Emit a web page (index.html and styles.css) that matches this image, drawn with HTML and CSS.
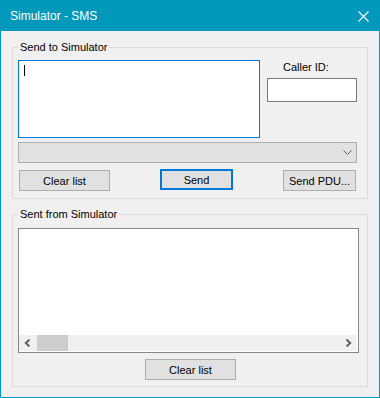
FILE: index.html
```html
<!DOCTYPE html>
<html lang="en">
<head>
  <meta charset="UTF-8" />
  <title>Simulator - SMS</title>
  <link rel="stylesheet" href="styles.css">
</head>
<body>

<div class="window">
  <div class="titlebar">
    <span class="title">Simulator - SMS</span>
    <svg class="close" width="11" height="11" viewBox="0 0 11 11">
      <path d="M0.5 0.5 L10.5 10.5 M10.5 0.5 L0.5 10.5" stroke="#fff" stroke-width="1.1" fill="none" />
    </svg>
  </div>

  <div class="client">
    <fieldset class="group group-send">
      <legend>Send to Simulator</legend>
      <div class="send-top">
        <div class="edit message"><span class="caret"></span></div>
        <div class="caller">
          <label class="caller-label">Caller ID:</label>
          <div class="edit caller-input"></div>
        </div>
      </div>
      <div class="combo">
        <svg width="9" height="5" viewBox="0 0 9 5">
          <path d="M0.5 0.5 L4.5 4.5 L8.5 0.5" stroke="#606060" stroke-width="1" fill="none" />
        </svg>
      </div>
      <div class="buttons">
        <button class="btn">Clear list</button>
        <button class="btn default">Send</button>
        <button class="btn">Send PDU...</button>
      </div>
    </fieldset>

    <fieldset class="group group-sent">
      <legend>Sent from Simulator</legend>
      <div class="listbox">
        <div class="list-body"></div>
        <div class="hscroll">
          <div class="arrow">
            <svg width="7" height="8" viewBox="0 0 7 8">
              <path d="M5.5 0.5 L1.8 4 L5.5 7.5" stroke="#606060" stroke-width="2" fill="none" />
            </svg>
          </div>
          <div class="thumb"></div>
          <div class="track"></div>
          <div class="arrow">
            <svg width="7" height="8" viewBox="0 0 7 8">
              <path d="M1.5 0.5 L5.2 4 L1.5 7.5" stroke="#606060" stroke-width="2" fill="none" />
            </svg>
          </div>
        </div>
      </div>
      <div class="bottom">
        <button class="btn">Clear list</button>
      </div>
    </fieldset>
  </div>
</div>

</body>
</html>
```

FILE: styles.css
```css
body {
  margin: 0;
  font-family: "Segoe UI", "Liberation Sans", Arial, sans-serif;
  font-size: 11px;
  color: #000;
}
.window {
  box-sizing: border-box;
  width: 380px;
  height: 398px;
  border: 1px solid #0099bc;
  background: #f0f0f0;
}
.titlebar {
  height: 30px;
  background: #0099bc;
  display: flex;
  align-items: center;
  justify-content: space-between;
  padding: 0 10px 0 9px;
  color: #fff;
}
.title { font-size: 12px; }
.close { display: block; }

.client {
  padding: 8px 0 0 11px;
}
.group {
  box-sizing: border-box;
  width: 356px;
  margin: 0;
  border: 1px solid #dcdcdc;
  padding: 4px 10px 7px 5px;
}
.group legend {
  line-height: 17px;
  padding: 0 2px;
  margin-left: 0;
}
.group-sent {
  margin-top: 7px;
  padding: 5px 8px 6px 5px;
}

.send-top {
  display: flex;
  gap: 7px;
}
.edit {
  box-sizing: border-box;
  background: #fff;
  border: 1px solid #7a7a7a;
}
.message {
  width: 242px;
  height: 78px;
  border-color: #0078d7;
  padding: 4px 0 0 5px;
}
.caret {
  display: block;
  width: 1px;
  height: 11px;
  background: #000;
}
.caller {
  width: 90px;
  display: flex;
  flex-direction: column;
}
.caller-label {
  line-height: 14px;
  margin-bottom: 4px;
  padding-left: 16px;
}
.caller-input { height: 24px; }

.combo {
  box-sizing: border-box;
  height: 21px;
  margin-top: 4px;
  background: #e1e1e1;
  border: 1px solid #adadad;
  display: flex;
  align-items: center;
  justify-content: flex-end;
  padding-right: 4px;
}
.combo svg { display: block; }

.buttons {
  display: flex;
  align-items: flex-start;
  gap: 50px;
  margin-top: 6px;
  padding-left: 1px;
}
.btn {
  box-sizing: border-box;
  width: 91px;
  height: 21px;
  margin: 1px 0 0;
  padding: 0;
  background: #e1e1e1;
  border: 1px solid #adadad;
  font: inherit;
  color: #000;
}
.buttons .btn + .btn { width: 73px; }
.btn.default {
  margin-top: 0;
  border: 2px solid #0078d7;
}

.listbox {
  box-sizing: border-box;
  height: 125px;
  background: #fff;
  border: 1px solid #828790;
  padding: 0 1px 1px 0;
  display: flex;
  flex-direction: column;
}
.list-body { flex: 1; }
.hscroll {
  height: 16px;
  display: flex;
  background: #f0f0f0;
}
.arrow {
  width: 17px;
  display: flex;
  align-items: center;
  justify-content: center;
}
.arrow svg { display: block; }
.thumb {
  width: 31px;
  margin-left: 1px;
  background: #cdcdcd;
}
.track { flex: 1; }

.bottom {
  margin-top: 6px;
  padding-left: 127px;
}
.bottom .btn { margin: 0; }
```
